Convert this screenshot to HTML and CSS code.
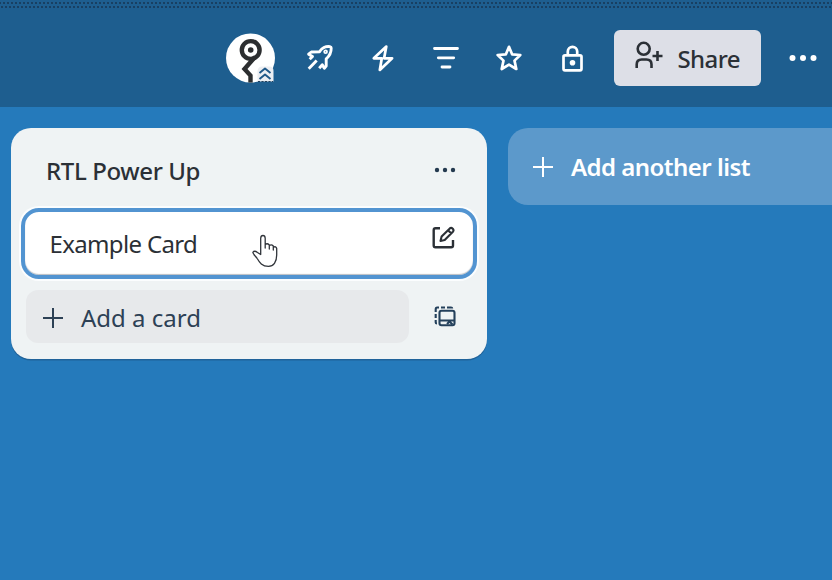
FILE: index.html
```html
<!DOCTYPE html>
<html lang="en">
<head>
<meta charset="utf-8">
<title>Board</title>
<link rel="stylesheet" href="styles.css">
</head>
<body>
<header class="bar">
  <svg class="avatar" viewBox="0 0 50 50">
    <circle cx="24.500" cy="25" r="24.5" fill="#fff"/>
    <circle cx="24.700" cy="17" r="8.900" fill="#fff" stroke="#2c2e30" stroke-width="4.400"/>
    <circle cx="24.700" cy="17" r="2.8" fill="#2c2e30"/>
    <path d="M29 24L18.500 36L24.500 42.500V49.500" fill="none" stroke="#2c2e30" stroke-width="4.400" stroke-linejoin="miter"/>
    <path d="M31.500 48.500V38Q32 33.500 36 33.500H43.500Q47.500 33.500 47.500 38V48.500Z" fill="#eceef2"/>
    <path d="M33.500 40L39 35.500L44.500 40M33.500 46L39 41.500L44.500 46" fill="none" stroke="#1e5787" stroke-width="1.900"/>
    <path d="M32 48.500H47" stroke="#24405b" stroke-width="1" stroke-dasharray="2 1.500"/>
  </svg>
  <svg class="icon" viewBox="0 0 32 32">
    <path d="M27 4.600C22.800 4 18.500 6 16.500 9.800L8.300 10L5.600 12.200L9.500 14.500L6.700 17.300M27 4.600Q28.200 4.800 28.200 6C28.300 10.500 26.500 14 23.200 16.800V24L21.300 26.200L19.300 22.800L16.200 26.200M13.700 18.600L5.700 26.800" stroke-width="2.900"/>
    <circle cx="22.600" cy="9.800" r="1.400" stroke-width="1.800"/>
  </svg>
  <svg class="icon" viewBox="0 0 32 32"><path d="M20.300 4.500L7.800 16.300H15.800L13.800 28L26.100 16.300H18.100Z"/></svg>
  <svg class="icon filter" viewBox="0 0 32 32"><path d="M4.500 6.500H27.500M8.300 15.800H23.700M12 25H20"/></svg>
  <svg class="icon" viewBox="0 0 32 32"><path d="M16 4.800L19.200 12.400L27.300 13L21.500 18.600L23.300 27L16 22.600L8.700 27L10.500 18.600L4.700 13L12.800 12.400Z"/></svg>
  <svg class="icon" viewBox="0 0 32 32"><rect x="6.500" y="13.300" width="18" height="15" rx="1.500"/><path d="M10.800 13V9.500A4.700 4.700 0 0 1 20.200 9.500V13"/><circle cx="15.500" cy="20.800" r="2.800" fill="#fff" stroke="none"/></svg>
  <div class="share">
    <svg class="person" viewBox="0 0 32 32"><circle cx="12.700" cy="8.800" r="6"/><path d="M5.700 28V24.500Q5.700 19.500 10.700 19.500H15.500Q20.500 19.500 20.500 24.500V28M26.500 11V21M21.500 16H31.500"/></svg>
    <span>Share</span>
  </div>
  <svg class="more" viewBox="0 0 28 8"><circle cx="3.500" cy="4" r="3"/><circle cx="14" cy="4" r="3"/><circle cx="24.500" cy="4" r="3"/></svg>
</header>
<main class="board">
  <section class="list">
    <div class="list-head">
      <h2>RTL Power Up</h2>
      <svg class="list-more" viewBox="0 0 24 6"><circle cx="4" cy="3" r="2.200"/><circle cx="12" cy="3" r="2.200"/><circle cx="20" cy="3" r="2.200"/></svg>
    </div>
    <div class="card">
      <span>Example Card</span>
      <svg class="edit" viewBox="0 0 24 24"><path d="M9 3.200H4.500Q2.700 3.200 2.700 5V20.500Q2.700 22.300 4.500 22.300H20.200Q22 22.300 22 20.500V15" stroke-width="2.400"/><path d="M9.500 16L10.600 11.600L18.800 3.400Q20.200 2.200 21.800 3.700Q23.200 5.300 21.900 6.700L13.700 14.900ZM17 5.200L20.100 8.300" stroke-width="2.100"/></svg>
    </div>
    <div class="list-foot">
      <div class="add-card">
        <svg class="plus" viewBox="0 0 22 22"><path d="M1 11H21M11 1V21"/></svg>
        <span>Add a card</span>
      </div>
      <svg class="template" viewBox="0 0 24 24"><path d="M2.700 7V4.500Q2.700 2.500 4.200 2.500H6M8 2.500H12M14 2.500H18Q19.200 2.500 19.200 3.500M2.700 9V13M2.700 15V17.500Q2.700 18.500 4 18.500"/><rect x="6.500" y="5.700" width="15" height="14.600" rx="2"/><path d="M7 15.500H21.500M14 19L17 16M16.500 16.500L19.500 19.500"/></svg>
    </div>
  </section>
  <div class="add-list">
    <svg class="plus" viewBox="0 0 22 22"><path d="M1 11H21M11 1V21"/></svg>
    <span>Add another list</span>
  </div>
</main>
<svg class="cursor" viewBox="0 0 28 34"><path d="M9.700 20.500V4.200Q9.900 1.500 12 1.500Q14 1.500 14.200 4.200V14V10.500Q16.300 8.800 18.300 11V15V11.500Q20.500 10 22.300 12V16V13.300Q25 11.800 25.700 14.500V21C25.700 28 22.500 32.300 17.500 32.300C11 32.300 8.500 28.500 6.200 24.500C5 22.300 2 20.500 1.800 18.300Q3.500 16.200 6.500 18.500Z"/></svg>
</body>
</html>
```
FILE: styles.css
```css
* { box-sizing: border-box; }
body {
  margin: 0;
  width: 832px;
  height: 580px;
  overflow: hidden;
  background: #257abb;
  color: #2b3036;
  font-family: "Noto Sans", "Open Sans", sans-serif;
  font-size: 24px;
  line-height: 32px;
}
svg { display: block; flex: none; fill: none; stroke-linejoin: round; }
span, h2 { white-space: nowrap; }
.bar {
  display: flex;
  align-items: center;
  height: 107px;
  padding: 0 14px 0 226px;
  background-color: #1e5e8f;
  background-image:
    radial-gradient(circle at 2px 2px, #183f61 0.7px, transparent 1px),
    radial-gradient(circle at 2px 2px, #183f61 0.7px, transparent 1px);
  background-size: 4px 4px;
  background-position: 2px 1px, 4px 5px;
  background-repeat: repeat-x;
}
.bar > * { position: relative; top: 4.5px; }
.avatar { width: 50px; height: 50px; margin-right: 27px; }
.icon {
  width: 32px;
  height: 32px;
  margin-right: 31.4px;
  stroke: #fff;
  stroke-width: 2.7;
}
.filter { stroke-width: 2.8; stroke-linecap: round; }
.share {
  display: flex;
  align-items: center;
  width: 147px;
  height: 56px;
  margin-left: -6px;
  padding-left: 17px;
  gap: 14.5px;
  border-radius: 6px;
  background: #dddfe7;
  font-weight: 500;
  letter-spacing: -0.6px;
}
.share span { margin-top: 2px; }
.person { width: 32px; height: 32px; margin-top: -4px; stroke: #2b3036; stroke-width: 2.6; }
.more { width: 28px; height: 8px; margin-left: 28px; fill: #fff; }
.board { display: flex; align-items: flex-start; padding: 21px 0 0 11px; gap: 21px; }
.list {
  flex: none;
  width: 476px;
  height: 231px;
  border-radius: 20px;
  background: #eff3f4;
  box-shadow: 0 1.5px 0 #20639a;
}
.list-head {
  display: flex;
  align-items: center;
  justify-content: space-between;
  height: 80px;
  padding: 6px 30px 0 35px;
}
h2 { margin: 0; font-size: 24px; font-weight: 500; letter-spacing: -0.38px; }
.list-more { width: 24px; height: 6px; margin-top: -2px; fill: #23394f; }
.card {
  display: flex;
  align-items: center;
  justify-content: space-between;
  height: 71px;
  margin: 0 10px;
  padding: 0 18px 0 24.5px;
  border: 4px solid #5294d1;
  border-radius: 18px;
  background: #fff;
  box-shadow: 0 0 0 2px #fbfdfe, inset 0 -1px 1px #b9bdc2;
  letter-spacing: -0.65px;
}
.edit { width: 24px; height: 24px; margin-top: -13px; stroke: #2b3036; }
.list-foot { display: flex; align-items: center; margin: 11px 0 0 15px; gap: 24px; }
.add-card {
  display: flex;
  align-items: center;
  gap: 17px;
  width: 383px;
  height: 53px;
  padding: 2px 0 0 16px;
  border-radius: 12px;
  background: #e7e9eb;
  color: #2d4155;
}
.plus { width: 22px; height: 22px; stroke: currentColor; stroke-width: 2; }
.template { width: 24px; height: 24px; stroke: #24405b; stroke-width: 2.1; }
.add-list {
  display: flex;
  align-items: center;
  flex: none;
  width: 344px;
  height: 77px;
  padding-left: 24px;
  gap: 17px;
  border-radius: 20px;
  background: #5c99cb;
  color: #fff;
  font-weight: 600;
  letter-spacing: -0.53px;
}
.cursor {
  position: absolute;
  left: 251px;
  top: 234px;
  width: 28px;
  height: 34px;
  fill: #fff;
  stroke: #30343a;
  stroke-width: 1.3;
}
```
